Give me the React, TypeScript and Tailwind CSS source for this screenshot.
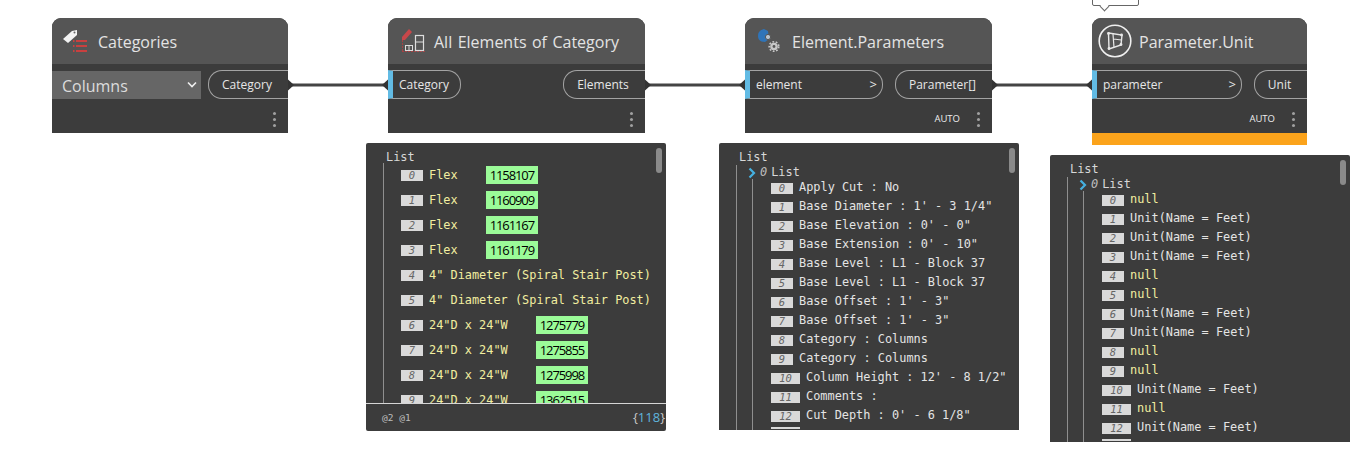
const mono = "font-['DejaVu_Sans_Mono',monospace] text-[11.9px]";

function CategoriesIcon() {
  return (
    <svg width="26" height="24" viewBox="0 0 26 24" className="shrink-0">
      <path d="M1 10 L10 2 L15 1 L15 6 L6 14 Z" fill="#f2f2f2" />
      <circle cx="12.5" cy="3.6" r="1" fill="#666" />
      <path d="M14 12h11M14 17h11M14 22h11" stroke="#c8403f" strokeWidth="2" />
      <path d="M11 12h1.5M11 17h1.5M11 22h1.5" stroke="#c8403f" strokeWidth="2" />
    </svg>
  );
}

function AllElementsIcon() {
  return (
    <svg width="26" height="26" viewBox="0 0 26 26" className="shrink-0">
      <path d="M2 9 L9 1 L12 4 L5 12 L2 12 Z" fill="#c8474a" />
      <path d="M2.5 12v11M2 23.5h23" stroke="#a84143" strokeWidth="1" strokeDasharray="2 1" />
      <rect x="5.5" y="17.5" width="7" height="5" fill="none" stroke="#ddd" strokeWidth="1" />
      <path d="M9 17.5v5" stroke="#ddd" />
      <rect x="15.5" y="7.5" width="8" height="15" fill="none" stroke="#ddd" strokeWidth="1.2" />
      <path d="M15.5 14h8" stroke="#ddd" />
    </svg>
  );
}

function ParametersIcon() {
  return (
    <svg width="26" height="26" viewBox="0 0 26 26" className="shrink-0">
      <path d="M1 8 C1 4 3 2 7 1 L11 3 L12 11 L8 14 C4 14 1 12 1 8 Z" fill="#2f74b8" />
      <circle cx="11" cy="9" r="2.6" fill="#b8c4d0" stroke="#555" strokeWidth="1" />
      <circle cx="17" cy="18.5" r="3.8" fill="#c6c6c6" />
      <circle cx="17" cy="18.5" r="4.8" fill="none" stroke="#c6c6c6" strokeWidth="1.6" strokeDasharray="1.8 1.6" />
      <circle cx="17" cy="18.5" r="1.4" fill="#555" />
    </svg>
  );
}

function UnitIcon() {
  return (
    <svg width="34" height="34" viewBox="0 0 34 34" className="shrink-0">
      <circle cx="17" cy="17" r="15.8" fill="none" stroke="#f0f0f0" strokeWidth="1.6" />
      <path d="M10.5 9 L24 11 L23 21 L11 25 Z" fill="none" stroke="#e8e8e8" strokeWidth="1.4" />
      <path d="M15 10 L16 23.5 M15.5 15 L23.5 16" stroke="#e8e8e8" strokeWidth="1.2" fill="none" />
      <circle cx="10.5" cy="9.5" r="1.4" fill="#e8e8e8" />
      <circle cx="23.5" cy="11" r="1.4" fill="#e8e8e8" />
      <circle cx="11" cy="24.5" r="1.4" fill="#e8e8e8" />
      <circle cx="23" cy="20.5" r="1.4" fill="#e8e8e8" />
    </svg>
  );
}

function Dots() {
  return (
    <div className="flex flex-col gap-[3px]">
      <div className="w-[3px] h-[3px] rounded-full bg-[#a0a0a0]" />
      <div className="w-[3px] h-[3px] rounded-full bg-[#a0a0a0]" />
      <div className="w-[3px] h-[3px] rounded-full bg-[#a0a0a0]" />
    </div>
  );
}

function InPort({ label, width, arrow }: { label: string; width: number; arrow?: boolean }) {
  return (
    <div
      className="h-[29px] flex items-center justify-between border border-l-[5px] border-[#a3a3a3] border-l-[#62bbe4] rounded-r-[14px] pl-[6px] pr-[5px] text-xs text-[#e6e6e6]"
      style={{ width }}
    >
      <span>{label}</span>
      {arrow && <span className="text-[13px]">&gt;</span>}
    </div>
  );
}

function OutPort({ label, width }: { label: string; width: number }) {
  return (
    <div
      className="h-[29px] flex items-center justify-center border border-r-0 border-[#a3a3a3] rounded-l-[14px] text-xs text-[#e6e6e6] pr-[3px]"
      style={{ width }}
    >
      {label}
    </div>
  );
}

function Node({
  left,
  width,
  title,
  icon,
  titleGap,
  iconPad,
  auto,
  warning,
  children,
}: {
  left: number;
  width: number;
  title: string;
  icon: React.ReactNode;
  titleGap: number;
  iconPad: number;
  auto?: boolean;
  warning?: boolean;
  children: React.ReactNode;
}) {
  return (
    <div className="absolute top-[18px] flex flex-col bg-[#3c3c3c] rounded-t-[9px] overflow-hidden" style={{ left, width }}>
      <div className="h-[46px] bg-[#555555] flex items-center text-base text-[#e3e3e3]" style={{ paddingLeft: iconPad, gap: titleGap }}>
        {icon}
        <span className="mt-[2px] [word-spacing:1.3px]">{title}</span>
      </div>
      <div className="flex justify-between items-center mt-[6px]">{children}</div>
      <div className="h-[34px] pt-[6px] flex items-center justify-end gap-[17px] pr-[12px]">
        {auto && <span className="text-[9.5px] font-medium text-[#ededed]">AUTO</span>}
        <Dots />
      </div>
      {warning && <div className="h-[12px] bg-[#fba31b]" />}
    </div>
  );
}

function Index({ n }: { n: number }) {
  return (
    <span className={`font-['DejaVu_Sans_Mono',monospace] text-[10.5px] italic shrink-0 h-[11px] bg-[#d9d9d9] text-[#666] flex items-center justify-center leading-none ${n > 9 ? "w-[29px]" : "w-[22px]"}`}>
      {n}
    </span>
  );
}

const flexRows: { name: string; id?: string }[] = [
  { name: "Flex", id: "1158107" },
  { name: "Flex", id: "1160909" },
  { name: "Flex", id: "1161167" },
  { name: "Flex", id: "1161179" },
  { name: '4" Diameter (Spiral Stair Post)' },
  { name: '4" Diameter (Spiral Stair Post)' },
  { name: '24"D x 24"W', id: "1275779" },
  { name: '24"D x 24"W', id: "1275855" },
  { name: '24"D x 24"W', id: "1275998" },
  { name: '24"D x 24"W', id: "1362515" },
];

const paramRows = [
  "Apply Cut : No",
  'Base Diameter : 1\' - 3 1/4"',
  'Base Elevation : 0\' - 0"',
  'Base Extension : 0\' - 10"',
  "Base Level : L1 - Block 37",
  "Base Level : L1 - Block 37",
  'Base Offset : 1\' - 3"',
  'Base Offset : 1\' - 3"',
  "Category : Columns",
  "Category : Columns",
  'Column Height : 12\' - 8 1/2"',
  "Comments :",
  'Cut Depth : 0\' - 6 1/8"',
];

const unit = "Unit(Name = Feet)";
const unitRows = ["null", unit, unit, unit, "null", "null", unit, unit, "null", "null", unit, "null", unit];

function Scrollbar() {
  return <div className="absolute top-[5px] right-[4px] w-[6px] h-[25px] rounded-full bg-[#8a8a8a]" />;
}

function FlatWatch() {
  return (
    <div className="absolute left-[366px] top-[143px] w-[300px] h-[288px] bg-[#3c3c3c] rounded-[2px] flex flex-col overflow-hidden">
      <Scrollbar />
      <div className="h-[261px] overflow-hidden border-b border-[#d6d6d6] pl-[17px] pt-[7px] flex flex-col">
        <div className={`${mono} text-[#d8d8d8] pl-[3px] leading-[14px]`}>List</div>
        <div className="-mt-[1px] border-l border-[#8f8f8f] pl-[17px] flex flex-col">
          {flexRows.map((row, i) => (
            <div key={i} className="h-[25px] flex items-center shrink-0 gap-[6px]">
              <Index n={i} />
              <span className={`${mono} text-[#f2eea0] whitespace-pre`}>{row.name}</span>
              {row.id && (
                <span className="h-[18px] -mt-[1px] ml-[22px] bg-[#9bfb98] text-black text-[13px] leading-[18px] px-[4px] font-['Open_Sans',sans-serif] tracking-[-1.1px]">
                  {row.id}
                </span>
              )}
            </div>
          ))}
        </div>
      </div>
      <div className="flex-1 flex items-center justify-between pl-[16px] pr-[1px] pt-[1px]">
        <span className="text-[9.5px] text-[#bdbdbd] font-['DejaVu_Sans_Mono',monospace]">@2 @1</span>
        <span className="text-[13px] text-[#c8c8c8] font-['Open_Sans',sans-serif]">
          {"{"}
          <span className="text-[#5fb4dc]">118</span>
          {"}"}
        </span>
      </div>
    </div>
  );
}

function NestedWatch({
  left,
  top,
  height,
  rows,
  yellowNull,
}: {
  left: number;
  top: number;
  height: number;
  rows: string[];
  yellowNull?: boolean;
}) {
  return (
    <div className="absolute w-[300px] bg-[#3c3c3c] rounded-t-[2px] overflow-hidden pl-[17px] pt-[7px]" style={{ left, top, height }}>
      <Scrollbar />
      <div className={`${mono} text-[#d8d8d8] pl-[3px] leading-[14px]`}>List</div>
      <div className="border-l border-[#8f8f8f] h-full">
        <div className="flex items-center h-[15px] pl-[11px] gap-[4px] mt-[1px]">
          <svg width="8" height="12" viewBox="0 0 8 12" className="shrink-0">
            <path d="M1.5 1.5 L6 6 L1.5 10.5" fill="none" stroke="#45b0e0" strokeWidth="2.2" />
          </svg>
          <span className={`${mono} italic text-[#bdbdbd]`}>0</span>
          <span className={`${mono} text-[#d8d8d8]`}>List</span>
        </div>
        <div className="-mt-[1.5px] ml-[15px] border-l border-[#8f8f8f] pl-[18px] h-full flex flex-col">
          {rows.map((row, i) => (
            <div key={i} className="h-[19px] flex items-center shrink-0 gap-[6px]">
              <Index n={i} />
              <span className={`${mono} whitespace-pre ${yellowNull && row === "null" ? "text-[#f2eea0]" : "text-[#e4e4e4]"}`}>{row}</span>
            </div>
          ))}
          <div className="h-[2px] w-[29px] mt-[1px] shrink-0 bg-[#d9d9d9]" />
        </div>
      </div>
    </div>
  );
}

export default function App() {
  return (
    <div className="relative w-[1360px] h-[454px] bg-white overflow-hidden font-['Open_Sans',sans-serif]">
      <svg width="1360" height="454" className="absolute left-0 top-0">
        <g stroke="#444444" strokeWidth="3">
          <path d="M290 85H386M647 85H743M994 85H1090" />
        </g>
        <g fill="#333333">
          <path d="M288 79.5 L294 85 L288 90.5 Z" />
          <path d="M388 79.5 L382 85 L388 90.5 Z" />
          <path d="M645 79.5 L651 85 L645 90.5 Z" />
          <path d="M745 79.5 L739 85 L745 90.5 Z" />
          <path d="M992 79.5 L998 85 L992 90.5 Z" />
          <path d="M1092 79.5 L1086 85 L1092 90.5 Z" />
        </g>
      </svg>

      {/* warning bubble cut off by the top of the view */}
      <div className="absolute left-[1092px] -top-[4px] w-[47px] h-[10px] bg-white border border-[#666] rounded-[2px]" />
      <div className="absolute left-[1101px] top-[3px] w-[7px] h-[7px] bg-white border-r border-b border-[#666] rotate-45" />

      <Node left={52} width={236} title="Categories" icon={<CategoriesIcon />} iconPad={10} titleGap={10}>
        <div className="w-[149px] h-[28px] bg-[#666666] text-base text-[#dcdcdc] flex items-center justify-between pl-[10px] pr-[3px]">
          <span className="mt-[2px]">Columns</span>
          <svg width="12" height="8" viewBox="0 0 12 8">
            <path d="M2 1.5 L6 5.5 L10 1.5" fill="none" stroke="#eee" strokeWidth="1.6" />
          </svg>
        </div>
        <OutPort label="Category" width={80} />
      </Node>

      <Node left={388} width={257} title="All Elements of Category" icon={<AllElementsIcon />} iconPad={12} titleGap={8}>
        <InPort label="Category" width={73} />
        <OutPort label="Elements" width={82} />
      </Node>

      <Node left={745} width={247} title="Element.Parameters" icon={<ParametersIcon />} iconPad={12} titleGap={9} auto>
        <InPort label="element" width={138} arrow />
        <OutPort label="Parameter[]" width={97} />
      </Node>

      <Node left={1092} width={215} title="Parameter.Unit" icon={<UnitIcon />} iconPad={6} titleGap={7} auto warning>
        <InPort label="parameter" width={150} arrow />
        <OutPort label="Unit" width={53} />
      </Node>

      <FlatWatch />
      <NestedWatch left={719} top={143} height={287} rows={paramRows} />
      <NestedWatch left={1050} top={155} height={287} rows={unitRows} yellowNull />
    </div>
  );
}
